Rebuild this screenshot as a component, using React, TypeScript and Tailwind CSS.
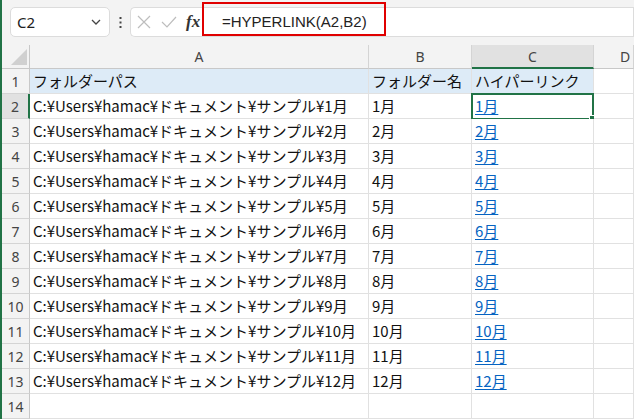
import React from 'react'

const months = Array.from({ length: 12 }, (_, i) => `${i + 1}月`)

const cellFont = { fontFamily: '"Noto Sans CJK JP", "Noto Sans", sans-serif' }

function RowHead({ n, active }: { n: number; active?: boolean }) {
  return (
    <div
      className={[
        'flex items-center justify-center border-b border-[#d4d4d4] text-[14px] text-[#444]',
        active ? 'bg-[#e1e1e1] border-r-2 border-r-[#217346]' : 'bg-[#f3f3f3] border-r border-r-[#c8c8c8]',
      ].join(' ')}
      style={{ fontFamily: '"Noto Sans", sans-serif' }}
    >
      {n}
    </div>
  )
}

function Cell({ children, head, className = '' }: { children?: React.ReactNode; head?: boolean; className?: string }) {
  return (
    <div
      className={[
        'relative flex items-center whitespace-nowrap border-b border-r border-[#e1e1e1] pl-[3px] pt-[1px] text-[15px] text-[#111]',
        head ? 'bg-[#ddebf7]' : 'bg-white',
        className,
      ].join(' ')}
      style={cellFont}
    >
      {children}
    </div>
  )
}

export default function App() {
  return (
    <div className="flex h-[419px] w-[634px] overflow-hidden bg-white">
      {/* window edge */}
      <div className="w-[2px] shrink-0 bg-[#217346]" />

      <div className="flex min-w-0 flex-1 flex-col">
        {/* FORMULA BAR */}
        <div className="flex h-[45px] shrink-0 items-start bg-[#f3f3f3] pt-[7px]">
          <div className="ml-[8px] flex h-[30px] w-[100px] items-center justify-between rounded-[5px] border border-[#dcdcdc] bg-white pl-[6px] pr-[8px] text-[15px] text-[#222]" style={{ fontFamily: '"Noto Sans", sans-serif' }}>
            <span>C2</span>
            <svg width="10" height="6" viewBox="0 0 10 6" fill="none" stroke="#444" strokeWidth="1.3">
              <path d="M1 1l4 4 4-4" />
            </svg>
          </div>
          <div className="flex h-[30px] w-[20px] items-center justify-center">
            <svg width="3" height="11" viewBox="0 0 3 11" fill="#444">
              <rect x="0.5" y="0" width="2" height="2" />
              <rect x="0.5" y="4.5" width="2" height="2" />
              <rect x="0.5" y="9" width="2" height="2" />
            </svg>
          </div>
          <div className="flex h-[30px] w-[72px] items-center rounded-l-[5px] border border-r-0 border-[#dcdcdc] bg-white pl-[6px]">
            <svg width="14" height="14" viewBox="0 0 14 14" fill="none" stroke="#bdbdbd" strokeWidth="1.2">
              <path d="M1 1l12 12M13 1L1 13" />
            </svg>
            <svg className="ml-[10px]" width="16" height="12" viewBox="0 0 16 12" fill="none" stroke="#bdbdbd" strokeWidth="1.2">
              <path d="M1 6l5 5L15 1" />
            </svg>
            <span className="ml-[9px] text-[17px] font-bold italic text-[#333]" style={{ fontFamily: '"Liberation Serif", serif' }}>
              fx
            </span>
          </div>
          <div className="relative flex h-[30px] min-w-0 flex-1 items-center border border-[#dcdcdc] bg-white pl-[19px] text-[15px] text-[#222]" style={{ fontFamily: '"Liberation Sans", sans-serif' }}>
            =HYPERLINK(A2,B2)
            <div className="pointer-events-none absolute left-[-1px] top-[-6px] h-[34px] w-[184px] border-2 border-[#e00000]" />
          </div>
        </div>

        {/* SHEET */}
        <div className="grid flex-1 grid-cols-[28px_339px_103px_122px_1fr] grid-rows-[24px_repeat(14,25px)]">
          {/* column headers */}
          <div className="relative border-b border-r border-[#c8c8c8] bg-[#f3f3f3]">
            <div className="absolute bottom-[3px] right-[2px] h-0 w-0 border-b-[16px] border-l-[16px] border-b-[#d0d0d0] border-l-transparent" />
          </div>
          {['A', 'B', 'C', 'D'].map((c) => (
            <div
              key={c}
              className={[
                'flex items-center justify-center border-r border-[#d4d4d4] text-[14px] text-[#444]',
                c === 'C' ? 'border-b-2 border-b-[#217346] bg-[#e1e1e1]' : 'border-b border-b-[#c8c8c8] bg-[#f3f3f3]',
                c === 'D' ? 'justify-start pl-[26px]' : '',
              ].join(' ')}
              style={{ fontFamily: '"Noto Sans", sans-serif' }}
            >
              {c}
            </div>
          ))}

          {/* row 1 */}
          <RowHead n={1} />
          <Cell head>フォルダーパス</Cell>
          <Cell head>フォルダー名</Cell>
          <Cell head>ハイパーリンク</Cell>
          <Cell />

          {months.map((m, i) => (
            <React.Fragment key={m}>
              <RowHead n={i + 2} active={i === 0} />
              <Cell>{`C:¥Users¥hamac¥ドキュメント¥サンプル¥${m}`}</Cell>
              <Cell>{m}</Cell>
              <Cell>
                <span className="text-[#0563c1] underline decoration-1 underline-offset-2">{m}</span>
                {i === 0 && (
                  <>
                    <div className="pointer-events-none absolute -left-[1px] -top-[1px] h-[27px] w-[123px] border-2 border-[#217346]" />
                    <div className="absolute -bottom-[3px] -right-[2px] h-[6px] w-[6px] border border-white bg-[#217346]" />
                  </>
                )}
              </Cell>
              <Cell />
            </React.Fragment>
          ))}

          <RowHead n={14} />
          <Cell />
          <Cell />
          <Cell />
          <Cell />
        </div>
      </div>
    </div>
  )
}
